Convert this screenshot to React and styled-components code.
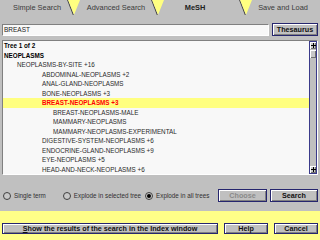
import React from "react";
import styled, { createGlobalStyle } from "styled-components";

const Global = createGlobalStyle`
  body {
    margin: 0;
    background: #c0c0c0;
    font-family: "Liberation Sans", Arial, sans-serif;
  }
`;

const Frame = styled.div`
  width: 320px;
  height: 240px;
  overflow: hidden;
  background: #c0c0c0;
  display: flex;
  flex-direction: column;
`;

const TabBar = styled.div`
  height: 15px;
  display: flex;
  background: #ffff80;
  flex-shrink: 0;
`;

const Tab = styled.div`
  position: relative;
  width: ${(p) => p.$w}px;
  padding-right: ${(p) => p.$pr || 0}px;
  box-sizing: border-box;
  background: #c0c0c0;
  display: flex;
  align-items: center;
  justify-content: center;
  font-size: 7.4px;
  color: ${(p) => (p.$active ? "#202020" : "#3a3a3a")};
  font-weight: ${(p) => (p.$active ? "bold" : "normal")};
  clip-path: polygon(
    ${(p) => (p.$first ? "0" : "6px")} 0,
    ${(p) => (p.$last ? "100%" : "calc(100% - 6px)")} 0,
    100% 100%,
    0 100%
  );
  &::after {
    content: "";
    display: ${(p) => (p.$last ? "none" : "block")};
    position: absolute;
    right: 3.5px;
    top: -1px;
    width: 1px;
    height: 17px;
    background: #404040;
    transform: rotate(-21deg);
  }
`;

const SearchRow = styled.div`
  display: flex;
  align-items: center;
  gap: 3px;
  margin: 8px 2px 0 2px;
  height: 13px;
`;

const Input = styled.div`
  flex: 1;
  height: 10px;
  background: #f8f8f8;
  border-top: 1px solid #808080;
  border-left: 1px solid #808080;
  border-bottom: 1px solid #ffffff;
  border-right: 1px solid #ffffff;
  font-size: 6.5px;
  line-height: 10px;
  padding-left: 1px;
  color: #202020;
`;

const Button = styled.div`
  width: ${(p) => p.$w}px;
  height: ${(p) => p.$h || 11}px;
  margin-left: ${(p) => p.$ml || 0}px;
  border: 1px solid #26266e;
  box-shadow: inset 1px 1px 0 #ffffff, inset -1px -1px 0 #808080;
  background: #c0c0c0;
  display: flex;
  align-items: center;
  justify-content: center;
  font-size: ${(p) => p.$fs || 7}px;
  font-weight: bold;
  color: ${(p) => (p.$disabled ? "#8a8a8a" : "#101010")};
  white-space: nowrap;
  flex-shrink: 0;
  u {
    text-decoration: underline;
  }
`;

const TreeBox = styled.div`
  margin: 4px 2px 0 2px;
  height: 133px;
  display: flex;
  background: #f8f8f8;
  border-top: 1px solid #808080;
  border-left: 1px solid #808080;
  border-bottom: 1px solid #ffffff;
  border-right: 1px solid #ffffff;
`;

const TreeList = styled.div`
  flex: 1;
  overflow: hidden;
`;

const TreeRow = styled.div`
  height: 9.5px;
  line-height: 9.5px;
  padding-left: ${(p) => p.$indent}px;
  font-size: 6.3px;
  white-space: nowrap;
  font-weight: ${(p) => (p.$bold ? "bold" : "normal")};
  color: ${(p) => (p.$selected ? "#ff0000" : p.$bold ? "#000000" : "#2a2a2a")};
  background: ${(p) => (p.$selected ? "#ffff80" : "transparent")};
`;

const Scrollbar = styled.div`
  width: 6px;
  border: 1px solid #3a3a8a;
  background: #c0c0c0;
  display: flex;
  flex-direction: column;
  justify-content: space-between;
`;

const ScrollTop = styled.div`
  display: flex;
  flex-direction: column;
  gap: 1px;
`;

const Arrow = styled.div`
  height: 7px;
  background: #c8c8c8;
  box-shadow: inset 1px 1px 0 #ffffff, inset -1px -1px 0 #707070;
  display: flex;
  align-items: center;
  justify-content: center;
`;

const Thumb = styled.div`
  height: 8px;
  background: #c8c8c8;
  box-shadow: inset 1px 1px 0 #ffffff, inset -1px -1px 0 #707070;
`;

const OptionsRow = styled.div`
  display: flex;
  align-items: center;
  margin: 14px 2px 0 2px;
  height: 13px;
`;

const Radio = styled.div`
  display: flex;
  align-items: center;
  gap: 3px;
  margin-left: ${(p) => p.$ml}px;
  font-size: 6.3px;
  color: #303030;
  white-space: nowrap;
`;

const Circle = styled.div`
  width: 6px;
  height: 6px;
  border-radius: 50%;
  border: 1px solid #404040;
  background: #c8c8c8;
  display: flex;
  align-items: center;
  justify-content: center;
  &::after {
    content: "";
    display: ${(p) => (p.$on ? "block" : "none")};
    width: 4px;
    height: 4px;
    border-radius: 50%;
    background: #000000;
  }
`;

const Spacer = styled.div`
  flex: 1;
`;

const Footer = styled.div`
  margin-top: 9px;
  flex: 1;
  background: #ffff88;
  display: flex;
  gap: 6px;
  align-items: flex-start;
  padding: 12px 2px 0 2px;
`;

const ArrowIcon = () => (
  <svg width="5" height="5" viewBox="0 0 5 5">
    <path d="M2 0h1v5H2zM0 2h5v1H0z" fill="#000" />
  </svg>
);

const rows = [
  { t: "Tree 1 of 2", i: 1, b: true },
  { t: "NEOPLASMS", i: 1, b: true },
  { t: "NEOPLASMS-BY-SITE +16", i: 14 },
  { t: "ABDOMINAL-NEOPLASMS +2", i: 39 },
  { t: "ANAL-GLAND-NEOPLASMS", i: 39 },
  { t: "BONE-NEOPLASMS +3", i: 39 },
  { t: "BREAST-NEOPLASMS +3", i: 39, s: true },
  { t: "BREAST-NEOPLASMS-MALE", i: 50 },
  { t: "MAMMARY-NEOPLASMS", i: 50 },
  { t: "MAMMARY-NEOPLASMS-EXPERIMENTAL", i: 50 },
  { t: "DIGESTIVE-SYSTEM-NEOPLASMS +6", i: 39 },
  { t: "ENDOCRINE-GLAND-NEOPLASMS +9", i: 39 },
  { t: "EYE-NEOPLASMS +5", i: 39 },
  { t: "HEAD-AND-NECK-NEOPLASMS +6", i: 39 },
];

const App = () => {
  return (
    <Frame>
      <Global />
      <TabBar>
        <Tab $w={74} $first>Simple Search</Tab>
        <Tab $w={84}>Advanced Search</Tab>
        <Tab $w={88} $active $pr={14}>MeSH</Tab>
        <Tab $w={74} $last>Save and Load</Tab>
      </TabBar>
      <SearchRow>
        <Input>BREAST</Input>
        <Button $w={44} $fs={7.2}>Thesaurus</Button>
      </SearchRow>
      <TreeBox>
        <TreeList>
          {rows.map((r) => (
            <TreeRow key={r.t} $indent={r.i} $bold={r.b || r.s} $selected={r.s}>
              {r.t}
            </TreeRow>
          ))}
        </TreeList>
        <Scrollbar>
          <ScrollTop>
            <Arrow><ArrowIcon /></Arrow>
            <Thumb />
          </ScrollTop>
          <Arrow><ArrowIcon /></Arrow>
        </Scrollbar>
      </TreeBox>
      <OptionsRow>
        <Radio $ml={1}><Circle />Single term</Radio>
        <Radio $ml={17}><Circle />Explode in selected tree</Radio>
        <Radio $ml={4}><Circle $on />Explode in all trees</Radio>
        <Spacer />
        <Button $w={47} $disabled $fs={7.2}>Choose</Button>
        <Button $w={46} $ml={3} $fs={7.2}>Search</Button>
      </OptionsRow>
      <Footer>
        <Button $w={214} $h={9} $fs={7.2}><span><u>S</u>how the results of the search in the Index window</span></Button>
        <Button $w={42} $h={9} $fs={7.2}>Help</Button>
        <Button $w={42} $h={9} $fs={7.2}>Cancel</Button>
      </Footer>
    </Frame>
  );
};

export default App;
